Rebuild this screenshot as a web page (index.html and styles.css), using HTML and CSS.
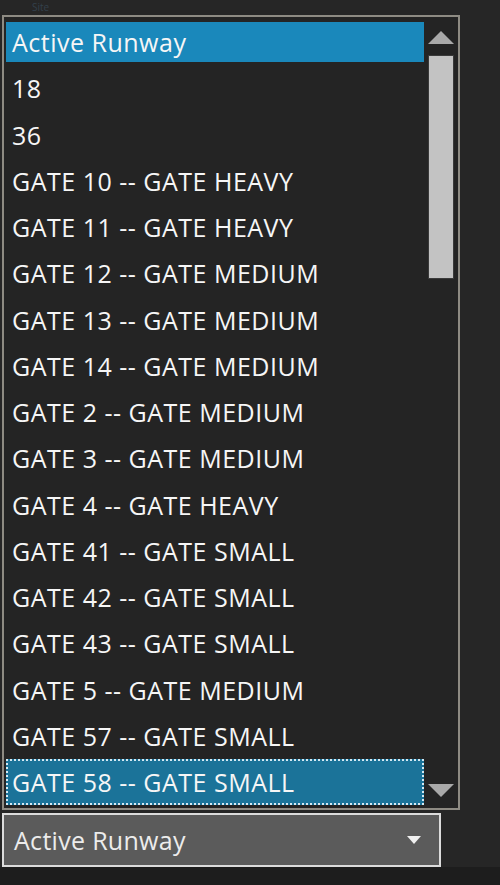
FILE: index.html
```html
<!DOCTYPE html>
<html lang="en">
  <head>
    <meta charset="UTF-8" />
    <meta name="viewport" content="width=device-width, initial-scale=1.0" />
    <title>Gate Selection</title>
    <link rel="stylesheet" href="styles.css">
  </head>
  <body>
    <div class="ghost">Site</div>
    <div class="listbox">
      <ul class="items">
        <li class="item hover">Active Runway</li>
        <li class="item">18</li>
        <li class="item">36</li>
        <li class="item">GATE 10 -- GATE HEAVY</li>
        <li class="item">GATE 11 -- GATE HEAVY</li>
        <li class="item">GATE 12 -- GATE MEDIUM</li>
        <li class="item">GATE 13 -- GATE MEDIUM</li>
        <li class="item">GATE 14 -- GATE MEDIUM</li>
        <li class="item">GATE 2 -- GATE MEDIUM</li>
        <li class="item">GATE 3 -- GATE MEDIUM</li>
        <li class="item">GATE 4 -- GATE HEAVY</li>
        <li class="item">GATE 41 -- GATE SMALL</li>
        <li class="item">GATE 42 -- GATE SMALL</li>
        <li class="item">GATE 43 -- GATE SMALL</li>
        <li class="item">GATE 5 -- GATE MEDIUM</li>
        <li class="item">GATE 57 -- GATE SMALL</li>
        <li class="item selected">GATE 58 -- GATE SMALL</li>
      </ul>
      <div class="scrollbar">
        <div class="arrow-up"></div>
        <div class="thumb"></div>
        <div class="track"></div>
        <div class="arrow-down"></div>
      </div>
    </div>
    <div class="combo">
      <span class="combo-text">Active Runway</span>
      <span class="combo-arrow"></span>
    </div>
    <div class="footer"></div>
  </body>
</html>
```

FILE: styles.css
```css
body {
  font-family: "Open Sans", "Noto Sans", sans-serif;
  background-color: #262626;
  margin: 0;
  padding: 0;
  width: 500px;
  height: 885px;
  overflow: hidden;
}

.ghost {
  height: 15px;
  padding-left: 32px;
  font-size: 10px;
  line-height: 15px;
  color: #33404b;
}

.listbox {
  display: flex;
  width: 454px;
  height: 791px;
  margin-left: 2px;
  border: 2px solid #8e8b83;
  background-color: #242424;
}

.items {
  list-style: none;
  margin: 0;
  padding: 2px 0 0 2px;
  width: 418px;
}

.item {
  height: 46.25px;
  box-sizing: border-box;
  padding: 0 6px;
  display: flex;
  align-items: center;
  font-size: 25px;
  letter-spacing: 0.5px;
  color: #f6f6f6;
  white-space: nowrap;
}

.item.hover,
.item.selected {
  padding-left: 0;
}

.item.hover::before,
.item.selected::before {
  content: "";
  width: 6px;
}

.item.hover {
  background: linear-gradient(#1a88bb, #1a88bb) no-repeat;
  background-size: 100% 40px;
  background-position: 0 3px;
}

.item.selected {
  background-color: #1b7399;
  border: 2px dotted #d4e9f3;
}

.item.selected::before {
  width: 4px;
}

.scrollbar {
  width: 34px;
  display: flex;
  flex-direction: column;
  align-items: center;
}

.arrow-up,
.arrow-down {
  width: 0;
  height: 0;
  border-left: 13px solid transparent;
  border-right: 13px solid transparent;
}

.arrow-up {
  margin-top: 14px;
  border-bottom: 13px solid #a9a9a9;
}

.arrow-down {
  margin-bottom: 11px;
  border-top: 13px solid #a9a9a9;
}

.thumb {
  margin-top: 11px;
  width: 24px;
  height: 222px;
  background-color: #c3c3c3;
  border: 1px solid #3a3a3a;
}

.track {
  flex: 1;
}

.combo {
  display: flex;
  align-items: center;
  justify-content: space-between;
  width: 439px;
  height: 54px;
  margin-top: 3px;
  margin-left: 2px;
  border: 2px solid #dcdcdc;
  background-color: #5b5b5b;
  padding: 0 18px 0 10px;
  box-sizing: border-box;
}

.combo-text {
  font-size: 25px;
  letter-spacing: 0.3px;
  color: #ececec;
}

.combo-arrow {
  width: 0;
  height: 0;
  border-left: 7px solid transparent;
  border-right: 7px solid transparent;
  border-top: 8px solid #f0f0f0;
}

.footer {
  height: 18px;
  background-color: #1d1d1d;
}
```
